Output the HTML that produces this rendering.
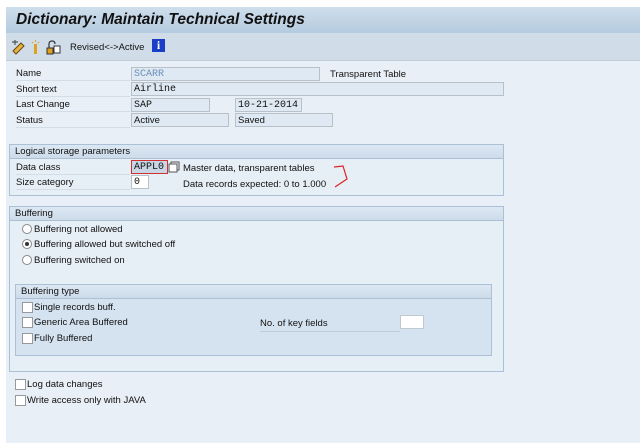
<!DOCTYPE html>
<html><head><style>
body{margin:0;width:640px;height:443px;overflow:hidden;background:#fff;font-family:"Liberation Sans",sans-serif;font-size:9.5px;color:#111;position:relative}
.a{position:absolute;white-space:nowrap}
.lbl{position:absolute;left:16px;width:114px;border-bottom:1px solid #d4dde6;height:14px;line-height:16px}
.fld{position:absolute;background:#dfe9f3;border:1px solid #b8c0c8;box-sizing:border-box;height:14px;line-height:13px;font-family:"Liberation Mono",monospace;font-size:10px;padding-left:2px;white-space:nowrap;overflow:hidden}
.grp{position:absolute;border:1px solid #a9c0d6;background:#e6eef6;box-sizing:border-box}
.gh{height:13px;line-height:14px;background:linear-gradient(#dce8f3,#cddbe9);border-bottom:1px solid #a9c0d6;padding-left:5px}
.rad{position:absolute;width:10px;height:10px;border:1px solid #888;border-radius:50%;background:#fff;box-sizing:border-box}
.chk{position:absolute;width:11px;height:11px;border:1px solid #999;background:#fff;box-sizing:border-box}
.t{position:absolute;line-height:12px;white-space:nowrap}
</style></head><body>
<div class="a" style="left:6px;top:7px;width:634px;height:436px;background:#e8eff6"></div>
<div class="a" style="left:6px;top:7px;width:634px;height:26px;background:linear-gradient(#cfdeeb,#b4cbe0)"></div>
<div class="a" style="left:16px;top:11px;font-size:15.5px;font-weight:bold;font-style:italic;color:#111">Dictionary: Maintain Technical Settings</div>
<div class="a" style="left:6px;top:33px;width:634px;height:27px;background:#d0dde8;border-bottom:1px solid #c0ccd8"></div>
<svg class="a" style="left:11px;top:39px" width="70" height="16">
<path d="M2 12 L10 4 L13 7 L5 15 Z" fill="#e8b040" stroke="#6a4a10" stroke-width="1"/>
<path d="M1 3 L7 3 M4 1 L4 6" stroke="#555" stroke-width="1.2"/>
<rect x="23" y="5" width="3" height="10" fill="#e0a020"/>
<path d="M24.5 1 L24.5 3 M21 3 L22 4 M28 3 L27 4" stroke="#e0a020"/>
<path d="M38 10 L38 5 Q38 2 41 2 Q44 2 44 5" stroke="#333" fill="none" stroke-width="1.2"/>
<rect x="36" y="9" width="6" height="6" fill="#e0a020" stroke="#333"/>
<rect x="43" y="7" width="6" height="7" fill="#fff" stroke="#333"/>
</svg>
<div class="a" style="left:70px;top:42px">Revised&lt;-&gt;Active</div>
<div class="a" style="left:152px;top:39px;width:13px;height:13px;background:#1a3ec8;color:#fff;font-weight:bold;text-align:center;line-height:13px;font-family:'Liberation Serif',serif;font-size:12px">i</div>

<div class="lbl" style="top:66px">Name</div>
<div class="fld" style="left:131px;top:67px;width:189px;color:#6a8fb8">SCARR</div>
<div class="t" style="left:330px;top:69px">Transparent Table</div>
<div class="lbl" style="top:82px">Short text</div>
<div class="fld" style="left:131px;top:82px;width:373px">Airline</div>
<div class="lbl" style="top:97px">Last Change</div>
<div class="fld" style="left:131px;top:98px;width:79px">SAP</div>
<div class="fld" style="left:235px;top:98px;width:67px">10-21-2014</div>
<div class="lbl" style="top:113px">Status</div>
<div class="fld" style="left:131px;top:113px;width:98px;font-family:'Liberation Sans';font-size:9.5px">Active</div>
<div class="fld" style="left:235px;top:113px;width:98px;font-family:'Liberation Sans';font-size:9.5px">Saved</div>

<div class="grp" style="left:9px;top:144px;width:495px;height:52px"><div class="gh">Logical storage parameters</div></div>
<div class="lbl" style="top:160px">Data class</div>
<div class="fld" style="left:131px;top:160px;width:37px;background:#c8d6e6;border:1px solid #d03030">APPL0</div>
<svg class="a" style="left:168px;top:161px" width="12" height="12"><rect x="1" y="3" width="8" height="8" fill="#fff" stroke="#555"/><path d="M3 3 L3 1 L11 1 L11 9 L9 9" fill="none" stroke="#555"/></svg>
<div class="t" style="left:183px;top:163px">Master data, transparent tables</div>
<div class="lbl" style="top:175px">Size category</div>
<div class="fld" style="left:131px;top:175px;width:18px;background:#fff">0</div>
<div class="t" style="left:183px;top:179px">Data records expected: 0 to 1.000</div>
<svg class="a" style="left:330px;top:164px" width="20" height="26"><path d="M4 3 L13 2 L17 15 L5 23" stroke="#e02020" fill="none" stroke-width="1.2"/></svg>

<div class="grp" style="left:9px;top:206px;width:495px;height:166px"><div class="gh">Buffering</div></div>
<div class="rad" style="left:22px;top:224px"></div><div class="t" style="left:34px;top:224px">Buffering not allowed</div>
<div class="rad" style="left:22px;top:239px"></div><div class="a" style="left:25px;top:242px;width:4px;height:4px;border-radius:50%;background:#333"></div><div class="t" style="left:34px;top:239px">Buffering allowed but switched off</div>
<div class="rad" style="left:22px;top:255px"></div><div class="t" style="left:34px;top:255px">Buffering switched on</div>

<div class="grp" style="left:15px;top:284px;width:477px;height:72px;background:#d5e3f0"><div class="gh">Buffering type</div></div>
<div class="chk" style="left:22px;top:302px"></div><div class="t" style="left:34px;top:302px">Single records buff.</div>
<div class="chk" style="left:22px;top:317px"></div><div class="t" style="left:34px;top:317px">Generic Area Buffered</div>
<div class="a" style="left:260px;top:316px;width:140px;border-bottom:1px solid #c0ccd8;line-height:15px">No. of key fields</div>
<div class="a" style="left:400px;top:315px;width:24px;height:14px;background:#fff;border:1px solid #c0c8d0;box-sizing:border-box"></div>
<div class="chk" style="left:22px;top:333px"></div><div class="t" style="left:34px;top:333px">Fully Buffered</div>

<div class="chk" style="left:15px;top:379px"></div><div class="t" style="left:27px;top:379px">Log data changes</div>
<div class="chk" style="left:15px;top:395px"></div><div class="t" style="left:27px;top:395px">Write access only with JAVA</div>
</body></html>
